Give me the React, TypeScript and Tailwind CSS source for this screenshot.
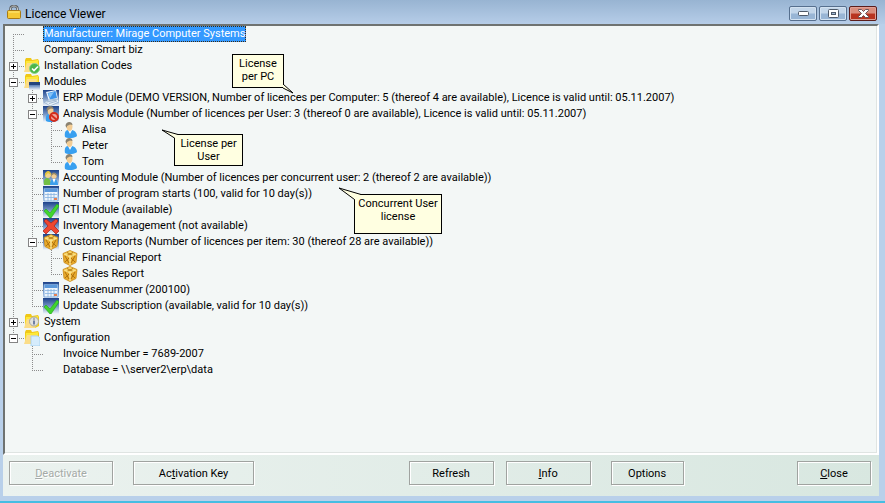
import type { ReactNode } from "react";

type IconName =
  | "codes"
  | "modules"
  | "system"
  | "config"
  | "computer"
  | "blocked"
  | "user"
  | "users"
  | "calendar"
  | "check"
  | "cross"
  | "box"
  | "cube";

interface TreeItem {
  label: string;
  icon?: IconName;
  collapsed?: boolean;
  selected?: boolean;
  children?: TreeItem[];
}

const TREE: TreeItem[] = [
  { label: "Manufacturer: Mirage Computer Systems", selected: true },
  { label: "Company: Smart biz" },
  { label: "Installation Codes", icon: "codes", collapsed: true },
  {
    label: "Modules",
    icon: "modules",
    children: [
      {
        label:
          "ERP Module (DEMO VERSION, Number of licences per Computer: 5 (thereof 4 are available), Licence is valid until: 05.11.2007)",
        icon: "computer",
        collapsed: true,
      },
      {
        label:
          "Analysis Module (Number of licences per User: 3 (thereof 0 are available), Licence is valid until: 05.11.2007)",
        icon: "blocked",
        children: [
          { label: "Alisa", icon: "user" },
          { label: "Peter", icon: "user" },
          { label: "Tom", icon: "user" },
        ],
      },
      {
        label: "Accounting Module (Number of licences per concurrent user: 2 (thereof 2 are available))",
        icon: "users",
      },
      { label: "Number of program starts (100, valid for 10 day(s))", icon: "calendar" },
      { label: "CTI Module (available)", icon: "check" },
      { label: "Inventory Management (not available)", icon: "cross" },
      {
        label: "Custom Reports (Number of licences per item: 30 (thereof 28 are available))",
        icon: "box",
        children: [
          { label: "Financial Report", icon: "cube" },
          { label: "Sales Report", icon: "cube" },
        ],
      },
      { label: "Releasenummer (200100)", icon: "calendar" },
      { label: "Update Subscription (available, valid for 10 day(s))", icon: "check" },
    ],
  },
  { label: "System", icon: "system", collapsed: true },
  {
    label: "Configuration",
    icon: "config",
    children: [{ label: "Invoice Number = 7689-2007" }, { label: "Database = \\\\server2\\erp\\data" }],
  },
];

function Folder() {
  return (
    <>
      <path d="M1 2 2 0h5l1 2 6-1 1 2v9l-4 2H1z" fill="#f0c818" />
      <path d="M2 3h6l6-1v9l-3 2H1z" fill="#fde838" />
      <path d="M0 14 3 5h10l-2 9z" fill="#fbdd88" />
    </>
  );
}

function Sky() {
  return <rect width="16" height="16" fill="url(#sky)" />;
}

function Person() {
  return (
    <>
      <path d="M3 15c-1-5 1-7 3-7l2 3 2-3c4 1 5 4 5 6-2 2-8 3-12 1z" fill="#38a0f0" />
      <path d="m6 8 2 4 2-4z" fill="#f4f8fc" />
      <path d="M4.500 4c0-4 6-4 6 0 0 3-1 5-3 5s-3-2-3-5z" fill="#f3cd94" />
      <path d="M3.500 4c0-5 7-5 7-1L8 2.500 5 4v2z" fill="#8a8270" />
    </>
  );
}

function Cube() {
  return (
    <>
      <path d="m8 .5 7 3-1 9-6 3-6-3-1-9z" fill="#e8aa2c" stroke="#c98c1c" strokeWidth=".8" />
      <path d="m8 1 6 3-6 3-6-3z" fill="#f8d868" />
      <path d="m5 2.500 6 3m0-3-6 3" stroke="#b87a14" fill="none" />
      <path d="M8 7v8" stroke="#fff0a8" strokeWidth="1.200" />
      <path d="m3 6 4 7M7 8l-4 4m10-6-4 7m0-5 4 4" stroke="#b07410" fill="none" />
      <path d="m2 4 6 3 6-3" stroke="#fff0a8" fill="none" strokeWidth=".8" />
    </>
  );
}

const ICONS: Record<IconName, ReactNode> = {
  codes: (
    <>
      <Folder />
      <circle cx="10.500" cy="10.500" r="5" fill="#4cb648" stroke="#8fd488" />
      <path d="m8 10.500 2 2 4-4" stroke="#fff" strokeWidth="1.600" fill="none" />
    </>
  ),
  modules: (
    <>
      <Folder />
      <rect x="5" y="8" width="11" height="8" fill="url(#sky)" />
      <rect x="5" y="8" width="11" height="3" fill="#24447e" />
    </>
  ),
  system: (
    <>
      <Folder />
      <circle cx="10" cy="7.500" r="4.500" fill="#e2e2de" stroke="#a6a6a2" />
      <path d="M10 4.500v1M10 6.500v4" stroke="#4b5f8f" strokeWidth="1.500" />
    </>
  ),
  config: (
    <>
      <Folder />
      <path d="M7 6h7l2 2v8H7z" fill="#d5ecfc" stroke="#9ccbec" strokeWidth=".7" />
    </>
  ),
  computer: (
    <>
      <Sky />
      <path d="m3 2 10-2 2 9-9 2z" fill="#eef6fd" />
      <path d="m4.500 3 8-2 1.500 7-7 1.500z" fill="#3c94ea" />
      <path d="m5 3.500 6-1.500-4 6z" fill="#84c2f8" />
      <path d="m1 12 5-2 9-1 1 3-9 4z" fill="#e6eff8" stroke="#8ba9c9" strokeWidth=".7" />
      <path d="m3.500 12 10-2m-7.500 3.500 8-2.500" stroke="#8ea8c6" strokeWidth=".8" />
    </>
  ),
  blocked: (
    <>
      <Sky />
      <Person />
      <circle cx="11" cy="11" r="4" fill="#f3a69a" stroke="#d42e1b" strokeWidth="2" />
      <path d="m8 9 6 5" stroke="#d42e1b" strokeWidth="2" />
    </>
  ),
  user: <Person />,
  users: (
    <>
      <Sky />
      <path d="M1 15c-1-5 1-7 3-7s4 2 4 7z" fill="#72bf45" />
      <circle cx="5" cy="5" r="3" fill="#f1d38e" />
      <path d="M2 7c-1-7 6-8 6-2L5 3 3 5z" fill="#e1c43b" />
      <path d="M7 15c0-5 2-6 4-6 3 0 4 3 4 6z" fill="#3d9fec" />
      <path d="m9.500 9 1.500 4 1.500-4z" fill="#fff" />
      <circle cx="11" cy="6" r="2.700" fill="#f3cd94" />
      <path d="M8 6c0-5 6-4 6 0l-3-2z" fill="#9a8a68" />
    </>
  ),
  calendar: (
    <>
      <Sky />
      <path d="M1 2.500h14V15H1z" fill="#eef5fc" stroke="#6b9dd5" strokeWidth=".8" />
      <path d="M1.500 3h13v3h-13z" fill="#5b98da" />
      <path d="M2 8.500h12M2 11.500h12M5 7v8M8 7v8M11 7v8" stroke="#86b2e0" strokeWidth=".8" />
      <path d="M11 12h3v2h-3z" fill="#e78052" />
    </>
  ),
  check: (
    <>
      <Sky />
      <path d="m1 9 2-2 4 4 7-9 2 2-8 12H7z" fill="#42d52d" stroke="#24a51b" strokeWidth=".6" />
    </>
  ),
  cross: (
    <>
      <Sky />
      <path
        d="m1 3 2-2 5 4 5-4 2 2-4 5 5 5-3 3-5-5-5 5-3-3 5-5z"
        fill="#ee4630"
        stroke="#a91c12"
        strokeWidth=".7"
      />
    </>
  ),
  box: (
    <>
      <Sky />
      <Cube />
    </>
  ),
  cube: <Cube />,
};

function Icon({ name }: { name?: IconName }) {
  return (
    <svg className="h-4 w-4 shrink-0" viewBox="0 0 16 16" aria-hidden="true">
      {name && ICONS[name]}
    </svg>
  );
}

interface GuideProps {
  up?: boolean;
  down?: boolean;
  across?: boolean;
  box?: "plus" | "minus";
}

/* One 19px column of dotted tree lines, with the expander drawn on top */
function Guide({ up, down, across, box }: GuideProps) {
  return (
    <svg
      className="h-4 w-[19px] shrink-0"
      viewBox="0 0 19 16"
      shapeRendering="crispEdges"
      fill="none"
      stroke="#8c8c8c"
      aria-hidden="true"
    >
      {up && <path d="M8.500 0v8" strokeDasharray="1 1" />}
      {down && <path d="M8.500 8v8" strokeDasharray="1 1" />}
      {across && <path d="M8 8.500h11" strokeDasharray="1 1" />}
      {box && (
        <>
          <rect x="4.500" y="4.500" width="8" height="8" fill="#fff" stroke="#848484" />
          <path d={box === "plus" ? "M6 8.500h5M8.500 6v5" : "M6 8.500h5"} stroke="#000" />
        </>
      )}
    </svg>
  );
}

function Branch({ items, trail = [] }: { items: TreeItem[]; trail?: boolean[] }) {
  return (
    <ul role={trail.length ? "group" : "tree"}>
      {items.map((item, i) => {
        const last = i === items.length - 1;
        const box = item.collapsed ? "plus" : item.children ? "minus" : undefined;
        return (
          <li key={item.label} role="treeitem" aria-selected={!!item.selected}>
            <div className="flex h-4 items-center whitespace-nowrap">
              {trail.map((open, n) => (
                <Guide key={n} up={open} down={open} />
              ))}
              <Guide up={trail.length > 0 || i > 0} down={!last} across box={box} />
              <Icon name={item.icon} />
              <span
                className={
                  item.selected
                    ? "ml-[3px] border border-dotted border-[#3b2a10] bg-[#3399ff] leading-[14px] text-white"
                    : "ml-1 leading-4"
                }
              >
                {item.label}
              </span>
            </div>
            {item.children && <Branch items={item.children} trail={[...trail, !last]} />}
          </li>
        );
      })}
    </ul>
  );
}

function Callout({ className, tail, children }: { className: string; tail: ReactNode; children: ReactNode }) {
  return (
    <div
      className={`absolute border border-black bg-[#ffffe1] pt-0.5 text-center leading-[13px] whitespace-nowrap ${className}`}
    >
      {children}
      {tail}
    </div>
  );
}

function PushButton({
  className,
  disabled,
  children,
}: {
  className: string;
  disabled?: boolean;
  children: ReactNode;
}) {
  return (
    <button
      type="button"
      disabled={disabled}
      className={`h-6 border border-[#a0a3a0] pt-0.5 shadow-[1px_1px_0_#fff,inset_1px_1px_0_#fff] disabled:text-[#a5aaa7] disabled:[text-shadow:1px_1px_0_#fff] ${className}`}
    >
      {children}
    </button>
  );
}

function TitleBar() {
  const control =
    "flex h-[15px] w-7 items-center justify-center rounded-[2px] border border-[#566f8e] bg-linear-to-b from-[#c3d6ea] from-45% to-[#98b5d5] to-55% shadow-[inset_0_0_0_1px_#d3e2f1]";
  return (
    <header className="flex h-6 items-center bg-linear-to-b from-[#98b4d2] to-[#b6cde8] pr-2 pl-[7px]">
      <svg className="h-[14px] w-[14px]" viewBox="0 0 14 14" aria-hidden="true">
        <path d="M3.500 7V4c0-4 7-4 7 0v3" fill="none" stroke="#55585a" strokeWidth="2.400" />
        <path d="M3.500 7V4c0-4 7-4 7 0v3" fill="none" stroke="#c8cccc" strokeWidth="1" />
        <rect x=".5" y="5.500" width="13" height="8" rx="1" fill="#f5c935" stroke="#a97a14" />
        <path d="M1.500 7h11" stroke="#ffec80" />
      </svg>
      <h1 className="ml-1 pt-1 text-[12px] leading-4">Licence Viewer</h1>
      <div className="ml-auto flex gap-0.5 pt-0.5">
        <button type="button" aria-label="Minimize" className={control}>
          <svg className="h-[5px] w-[11px]" viewBox="0 0 11 5">
            <rect x=".5" y=".5" width="10" height="4" rx="1" fill="#fff" stroke="#4e5968" />
          </svg>
        </button>
        <button type="button" aria-label="Maximize" className={control}>
          <svg className="h-[9px] w-[11px]" viewBox="0 0 11 9">
            <rect x=".5" y=".5" width="10" height="8" rx="1" fill="#fff" stroke="#4e5968" />
            <rect x="3.500" y="3.500" width="4" height="2" fill="#9fb8d4" stroke="#4e5968" />
          </svg>
        </button>
        <button
          type="button"
          aria-label="Close window"
          className="flex h-[15px] w-7 items-center justify-center rounded-[2px] border border-[#5b1d1b] bg-linear-to-b from-[#d98d7d] from-45% to-[#b83420] to-55% shadow-[inset_0_0_0_1px_#dfa095]"
        >
          <svg className="h-[9px] w-[11px]" viewBox="0 0 11 9">
            <path
              d="M.5.500h3l2 2 2-2h3v1l-3 3 3 3v1h-3l-2-2-2 2h-3v-1l3-3-3-3z"
              fill="#fff"
              stroke="#5a4a50"
              strokeWidth=".9"
            />
          </svg>
        </button>
      </div>
    </header>
  );
}

export default function App() {
  return (
    <div className="flex min-h-screen flex-col border-b-2 border-[#45bde2] bg-[#b9d0ea] font-['Roboto',sans-serif] text-[11px] text-black">
      <svg className="absolute h-0 w-0" aria-hidden="true">
        <defs>
          <linearGradient id="sky" x1="0" y1="0" x2="0" y2="1">
            <stop offset="0" stopColor="#1d428a" />
            <stop offset=".5" stopColor="#7393c4" />
            <stop offset="1" stopColor="#f2f6fb" />
          </linearGradient>
        </defs>
      </svg>
      <TitleBar />
      <div className="mr-1.5 mb-[5px] ml-[3px] flex grow flex-col bg-linear-to-r from-[#ebf2ef] to-[#d8e7e0]">
        <main className="relative grow border-2 border-t-[#6f7371] border-r-white border-b-white border-l-[#6f7371] bg-[#f3f7f6] shadow-[inset_-1px_-1px_0_#dfe4e2]">
          <Branch items={TREE} />
          <Callout
            className="top-7 left-[227px] h-[34px] w-[52px]"
            tail={
              <svg className="absolute top-[28px] left-[47px] h-[12px] w-[14px]" viewBox="0 0 14 12">
                <path d="M3 1 13 10 3 5z" fill="#ffffe1" />
                <path d="M3 1 13 10 3 5" fill="none" stroke="#000" />
              </svg>
            }
          >
            License
            <br />
            per PC
          </Callout>
          <Callout
            className="top-[108px] left-[169px] h-8 w-[69px]"
            tail={
              <svg className="absolute -top-1.5 -left-3.5 h-[10px] w-[18px]" viewBox="0 0 18 10">
                <path d="M13.500 9 1 1 17 5.500 15 8z" fill="#ffffe1" />
                <path d="M13.500 9 1 1 17 5.500" fill="none" stroke="#000" />
              </svg>
            }
          >
            License per
            <br />
            User
          </Callout>
          <Callout
            className="top-[168px] left-[349px] h-10 w-[88px]"
            tail={
              <svg className="absolute -top-2 -left-[17px] h-[14px] w-[26px]" viewBox="0 0 26 14">
                <path d="M16.500 12.500 1 1 23 7.500 19 10z" fill="#ffffe1" />
                <path d="M16.500 12.500 1 1 23 7.500" fill="none" stroke="#000" />
              </svg>
            }
          >
            Concurrent User
            <br />
            license
          </Callout>
        </main>
        <footer className="flex py-1.5 pr-2 pb-[11px] pl-1.5">
          <PushButton className="w-[104px]" disabled>
            <u>D</u>eactivate
          </PushButton>
          <PushButton className="ml-5 w-[121px]">
            Ac<u>t</u>ivation Key
          </PushButton>
          <div className="grow-[15]" />
          <PushButton className="w-[85px]">Refresh</PushButton>
          <PushButton className="ml-3 w-[85px]">
            <u>I</u>nfo
          </PushButton>
          <PushButton className="ml-5 w-[73px]">Options</PushButton>
          <div className="grow-[11]" />
          <PushButton className="w-[74px]">
            <u>C</u>lose
          </PushButton>
        </footer>
      </div>
    </div>
  );
}
